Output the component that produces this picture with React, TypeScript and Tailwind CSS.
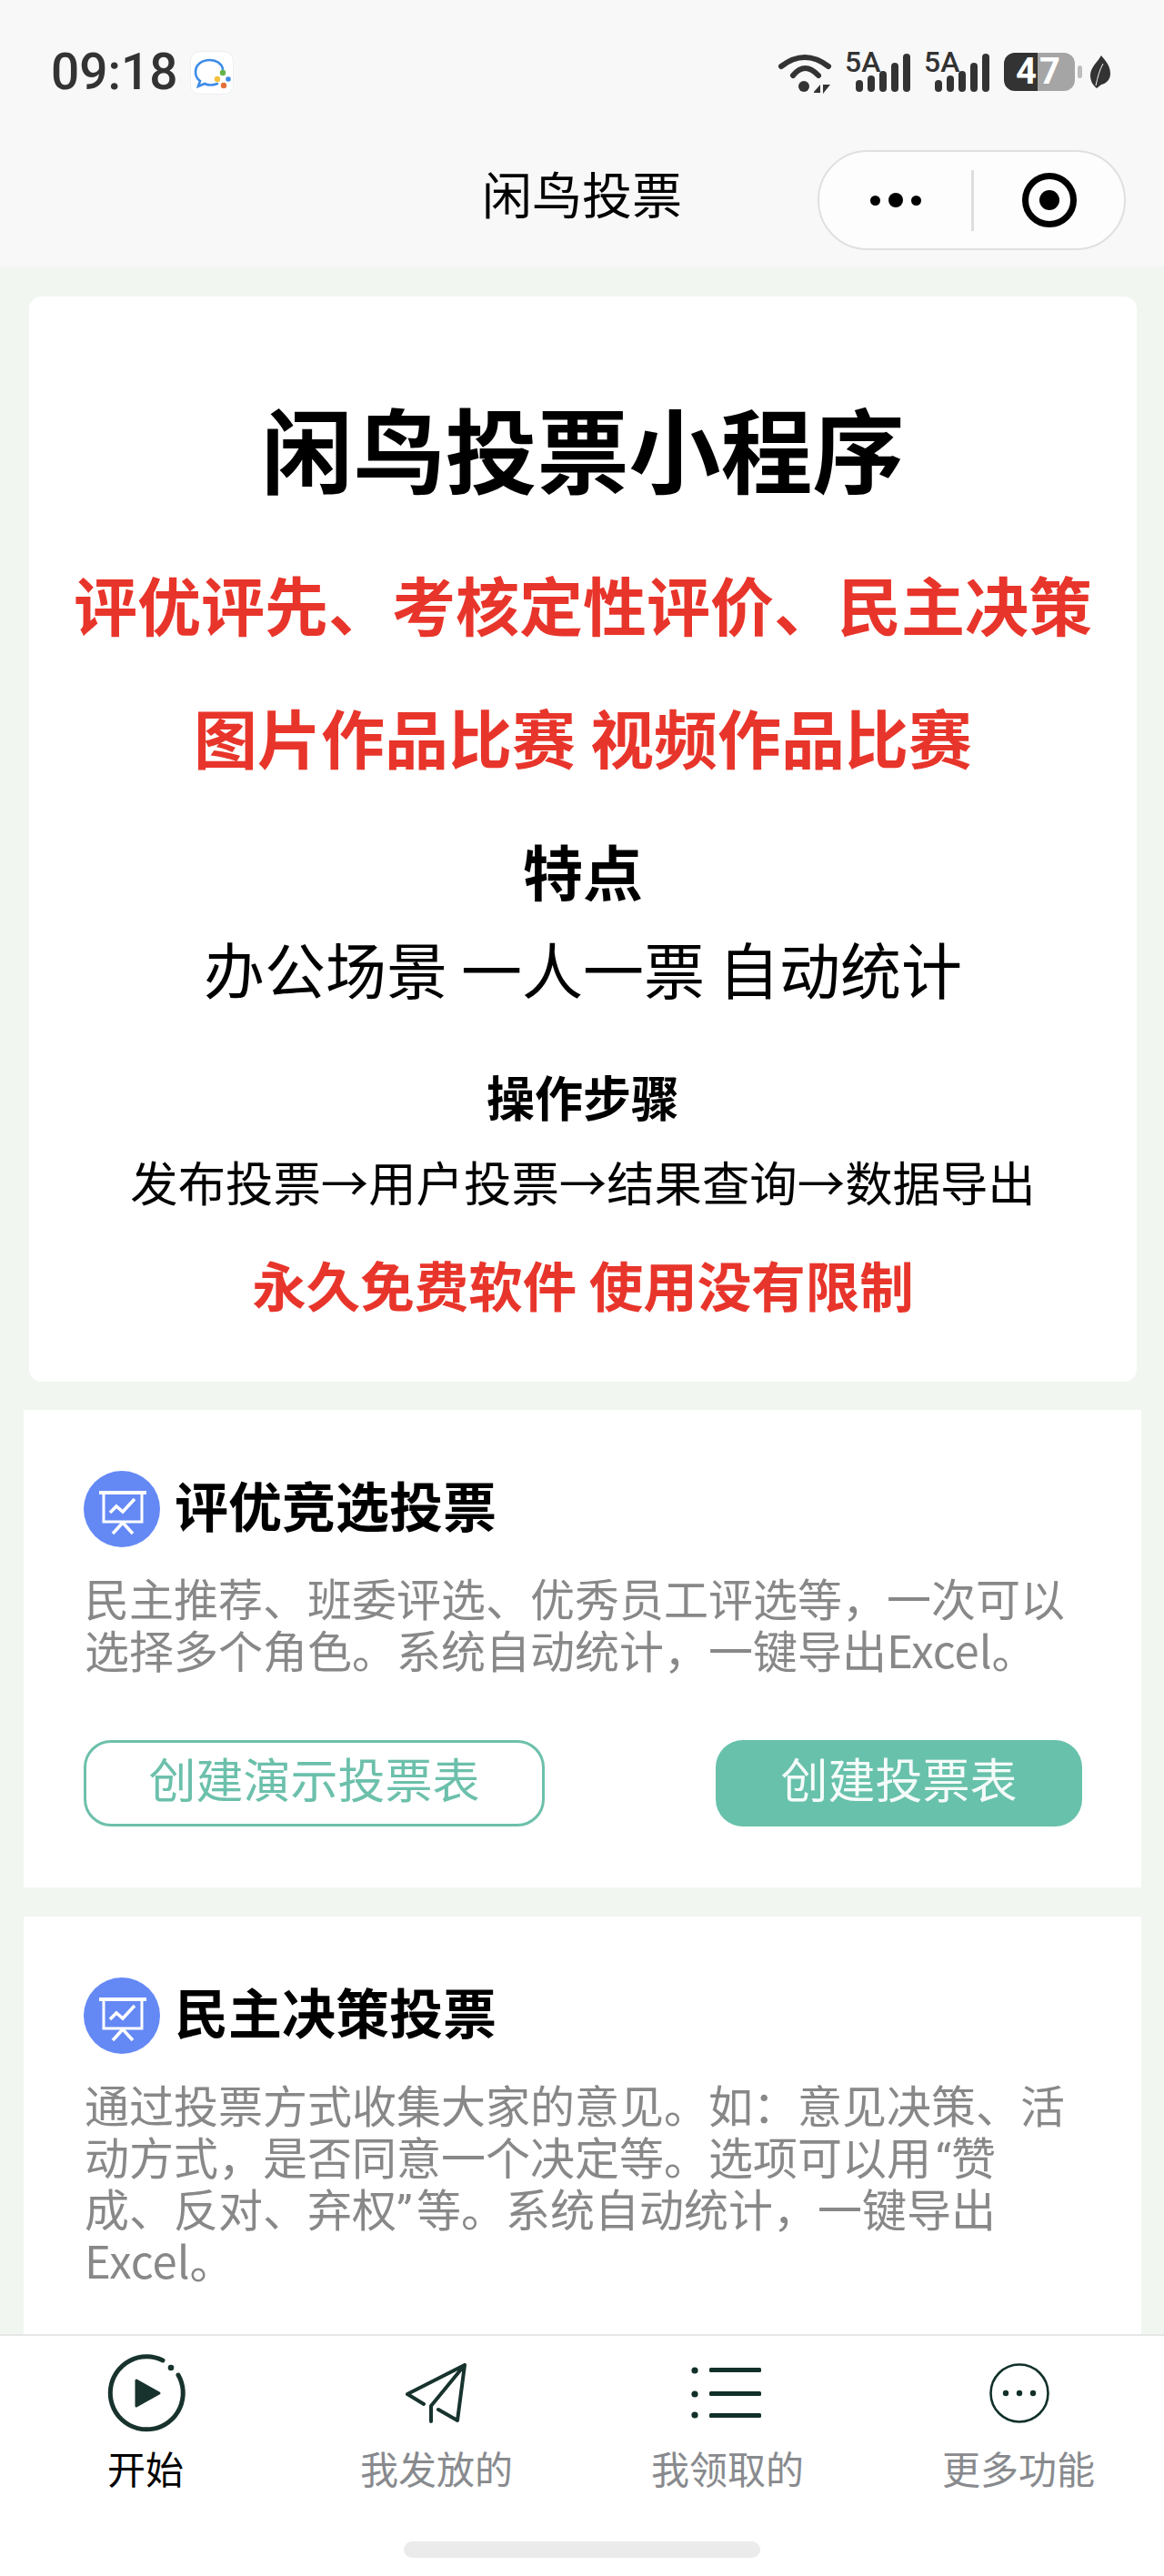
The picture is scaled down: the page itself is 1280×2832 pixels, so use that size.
import type { ReactNode } from "react";

function ChatAppIcon() {
  return (
    <div className="ml-[13px] mt-[2px] flex h-12 w-12 items-center justify-center rounded-[11px] border border-[#efefef] bg-white">
      <svg width="46" height="46" viewBox="0 0 46 46">
        <path
          d="M35 19C34 13 28 9 21 9C12 9 5 14 5 22C5 27 7 30 10 32L8 38L15 35C19 37 24 37 29 35"
          fill="none"
          stroke="#3d8be8"
          strokeWidth="2.6"
          strokeLinecap="round"
        />
        <path d="M33 27L36 24L40 27L36 30Z" fill="#fff" />
        <circle cx="35" cy="23" r="3.2" fill="#62b34a" />
        <circle cx="41" cy="30" r="2.8" fill="#3d8be8" />
        <circle cx="36" cy="37" r="3.2" fill="#e2703a" />
        <circle cx="29" cy="30" r="3.2" fill="#f2c13d" />
      </svg>
    </div>
  );
}

function WifiIcon() {
  return (
    <svg width="60" height="46" viewBox="0 0 60 46" className="mr-[14px]">
      <path d="M3 15Q29 -5 55 15" fill="none" stroke="#333" strokeWidth="6" strokeLinecap="round" />
      <path d="M16 25Q29 9 44 25" fill="none" stroke="#333" strokeWidth="6" strokeLinecap="round" />
      <circle cx="28" cy="37" r="6" fill="#333" />
      <path d="M39 43L46 35V44H39Z" fill="#333" />
      <path d="M49 35H57L49 45Z" fill="#333" />
    </svg>
  );
}

function SignalIcon() {
  return (
    <div className="relative mr-[15px] h-[44px] w-[72px]">
      <span className="absolute left-[-1px] top-[-6px] font-['Roboto',sans-serif] text-[32px] font-medium leading-[32px] text-[#333]">
        5A
      </span>
      <svg width="72" height="44" viewBox="0 0 72 44" className="absolute left-0 top-0">
        <rect x="11" y="30" width="8" height="13" rx="4" fill="#333" />
        <rect x="24" y="25" width="8" height="18" rx="4" fill="#333" />
        <rect x="37" y="20" width="8" height="23" rx="4" fill="#333" />
        <rect x="50" y="11" width="8" height="32" rx="4" fill="#333" />
        <rect x="63" y="1" width="8" height="42" rx="4" fill="#333" />
      </svg>
    </div>
  );
}

function BatteryIcon() {
  return (
    <div className="flex items-center">
      <div className="relative flex h-[42px] w-[78px]">
        <div className="w-[37px] rounded-l-[12px] bg-[#333]" />
        <div className="flex-1 rounded-r-[12px] bg-[#a5a5a5]" />
        <span className="absolute inset-0 flex items-center justify-center font-['Roboto',sans-serif] text-[40px] font-bold leading-[42px] tracking-[3px] text-white">
          47
        </span>
      </div>
      <div className="ml-[3px] h-[14px] w-[5px] rounded-full bg-[#bdbdbd]" />
      <svg width="24" height="38" viewBox="0 0 24 38" className="ml-[8px]">
        <path d="M13 1C17 6 23 12 23 21C23 28 18 32 13 33L8 37C3 33 1 28 1 23C1 14 9 8 13 1Z" fill="#333" />
        <path d="M7 34C9 25 11 17 15 10" fill="none" stroke="#f8f8f8" strokeWidth="1" />
      </svg>
    </div>
  );
}

function Capsule() {
  return (
    <div className="mr-[42px] flex h-[110px] w-[339px] items-center justify-self-end rounded-full border-2 border-[#e0e0e0] bg-[#fdfdfd]">
      <div className="flex flex-1 items-center justify-center gap-[9px]">
        <span className="h-[11px] w-[11px] rounded-full bg-black" />
        <span className="h-[16px] w-[16px] rounded-full bg-black" />
        <span className="h-[11px] w-[11px] rounded-full bg-black" />
      </div>
      <div className="h-[67px] w-[3px] bg-[#dedede]" />
      <div className="flex w-[165px] items-center justify-center">
        <svg width="60" height="60" viewBox="0 0 60 60">
          <circle cx="30" cy="30" r="26.5" fill="none" stroke="#000" strokeWidth="7" />
          <circle cx="30" cy="30" r="11" fill="#000" />
        </svg>
      </div>
    </div>
  );
}

function PresentationIcon() {
  return (
    <div className="flex h-[84px] w-[84px] shrink-0 items-center justify-center rounded-full bg-[#6489f5]">
      <svg width="84" height="84" viewBox="0 0 84 84" fill="none" stroke="#fff">
        <path d="M17 24H69" strokeWidth="4" />
        <path d="M22 24V56H64V24" strokeWidth="3" />
        <path d="M43 57L32 69M43 57L54 69" strokeWidth="3.5" />
        <path d="M29 46L36 39L43 45L56 31" strokeWidth="3.5" />
      </svg>
    </div>
  );
}

function VoteCard({
  title,
  lines,
  className,
  children,
}: {
  title: string;
  lines: ReactNode[];
  className?: string;
  children?: ReactNode;
}) {
  return (
    <section className={"ml-[26px] w-[1229px] shrink-0 bg-white pl-[66px] pr-[65px] pt-[67px] " + (className ?? "")}>
      <div className="flex items-center gap-4">
        <PresentationIcon />
        <h2 className="pb-[10px] text-[59px] font-bold leading-[72px] text-black">{title}</h2>
      </div>
      <div className="mt-[26px] whitespace-nowrap pl-[1px] text-[49px] leading-[57px] text-[#888]">
        {lines.map((line, index) => (
          <p key={index} className="h-[57px]">
            {line}
          </p>
        ))}
      </div>
      {children}
    </section>
  );
}

const redText = "font-bold text-[#e8352b]";

const tabs = [
  { label: "开始", active: true },
  { label: "我发放的", active: false },
  { label: "我领取的", active: false },
  { label: "更多功能", active: false },
];

function TabIcon({ index }: { index: number }) {
  if (index === 0) {
    return (
      <svg width="90" height="90" viewBox="0 0 90 90" fill="none" stroke="#18332e" strokeLinecap="round">
        <path d="M81 26A40 40 0 1 1 64 10" strokeWidth="5" />
        <circle cx="73" cy="18" r="3.3" fill="#18332e" stroke="none" />
        <path d="M35 32L60 46L35 60Z" fill="#18332e" strokeWidth="3" strokeLinejoin="round" />
      </svg>
    );
  }
  if (index === 1) {
    return (
      <svg width="90" height="90" viewBox="0 0 90 90" fill="none" stroke="#18332e" strokeWidth="4" strokeLinecap="round" strokeLinejoin="round">
        <path d="M13 47L31 58M13 47L76 15L68 76L47 64M76 15L39 60V77" />
      </svg>
    );
  }
  if (index === 2) {
    return (
      <svg width="90" height="90" viewBox="0 0 90 90" fill="#11302a">
        <circle cx="9" cy="21" r="3.6" />
        <circle cx="9" cy="47" r="3.6" />
        <circle cx="9" cy="70" r="3.6" />
        <rect x="25" y="18" width="57" height="5" rx="1.5" />
        <rect x="25" y="44" width="57" height="5" rx="1.5" />
        <rect x="25" y="68" width="57" height="5" rx="1.5" />
      </svg>
    );
  }
  return (
    <svg width="90" height="90" viewBox="0 0 90 90" fill="#11302a">
      <circle cx="46" cy="46" r="31.5" fill="none" stroke="#11302a" strokeWidth="2.6" />
      <circle cx="31" cy="46" r="3.2" />
      <circle cx="46" cy="46" r="3.2" />
      <circle cx="61" cy="46" r="3.2" />
    </svg>
  );
}

export default function App() {
  return (
    <div className="flex h-[2832px] w-[1280px] flex-col overflow-hidden bg-[#f1f6f1] font-['Noto_Sans_CJK_SC','Noto_Sans',sans-serif]">
      <header className="h-[293px] shrink-0 bg-[#f8f8f8]">
        <div className="flex h-[165px] items-start pl-[56px] pr-[58px] pt-[54px]">
          <span className="font-['Roboto',sans-serif] text-[55px] font-medium leading-[50px] text-[#333]">09:18</span>
          <ChatAppIcon />
          <div className="ml-auto mt-[4px] flex items-start">
            <WifiIcon />
            <SignalIcon />
            <SignalIcon />
            <BatteryIcon />
          </div>
        </div>
        <div className="grid h-[110px] grid-cols-[1fr_auto_1fr] items-center">
          <span />
          <h1 className="pb-[18px] text-[55px] font-normal leading-[70px] text-black">闲鸟投票</h1>
          <Capsule />
        </div>
      </header>

      <main className="flex min-h-0 flex-1 flex-col overflow-hidden pt-[33px]">
        <section className="ml-8 flex w-[1218px] shrink-0 flex-col items-center rounded-[14px] bg-white pb-[68px] pt-[105px] text-black">
          <h2 className="text-[101px] font-bold leading-[120px]">闲鸟投票小程序</h2>
          <p className={"mt-[68px] text-[70px] leading-[90px] " + redText}>评优评先、考核定性评价、民主决策</p>
          <p className={"mt-[56px] text-[70px] leading-[90px] " + redText}>图片作品比赛 视频作品比赛</p>
          <p className="mt-[61px] text-[66px] font-bold leading-[80px]">特点</p>
          <p className="mt-[28px] text-[67px] leading-[80px]">办公场景 一人一票 自动统计</p>
          <p className="mt-[66px] text-[53px] font-bold leading-[70px]">操作步骤</p>
          <p className="mt-[23px] text-[52.4px] leading-[70px]">发布投票→用户投票→结果查询→数据导出</p>
          <p className={"mt-[38px] text-[59.5px] leading-[80px] " + redText}>永久免费软件 使用没有限制</p>
        </section>

        <VoteCard
          className="mt-[31px] pb-[67px]"
          title="评优竞选投票"
          lines={["民主推荐、班委评选、优秀员工评选等，一次可以", "选择多个角色。系统自动统计，一键导出Excel。"]}
        >
          <div className="mt-[72px] flex justify-between">
            <button className="h-[95px] w-[507px] rounded-[30px] border-[3px] border-[#6cc0ab] pb-[12px] text-[52px] leading-[70px] text-[#6cc0ab]">
              创建演示投票表
            </button>
            <button className="h-[95px] w-[403px] rounded-[30px] bg-[#68c1ab] pb-[12px] text-[52px] leading-[70px] text-[#f4fbf9]">
              创建投票表
            </button>
          </div>
        </VoteCard>

        <VoteCard
          className="mt-[32px] pb-[200px]"
          title="民主决策投票"
          lines={[
            "通过投票方式收集大家的意见。如：意见决策、活",
            <>
              动方式，是否同意一个决定等。选项可以用<span className="inline-block w-[22px] text-right font-['Roboto',sans-serif]">“</span>赞
            </>,
            <>
              成、反对、弃权<span className="inline-block w-[22px] font-['Roboto',sans-serif]">”</span>等。系统自动统计，一键导出
            </>,
            "Excel。",
          ]}
        />
      </main>

      <nav className="h-[266px] shrink-0 border-t-2 border-[#e6e6e6] bg-white">
        <div className="grid grid-cols-4 pt-[17px]">
          {tabs.map((tab, index) => (
            <div key={tab.label} className="flex flex-col items-center">
              <TabIcon index={index} />
              <span className={"mt-[10px] text-[42px] leading-[56px] " + (tab.active ? "text-black" : "text-[#888a8e]")}>
                {tab.label}
              </span>
            </div>
          ))}
        </div>
        <div className="mx-auto mt-[53px] h-[18px] w-[392px] rounded-full bg-[#ebebeb]" />
      </nav>
    </div>
  );
}
